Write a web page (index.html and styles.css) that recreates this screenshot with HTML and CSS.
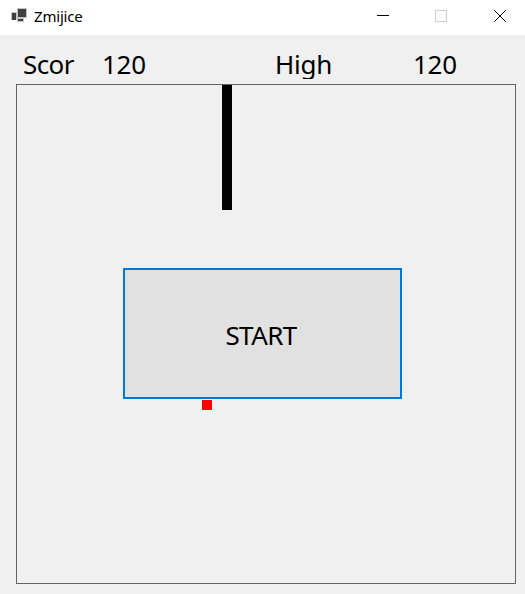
FILE: index.html
```html
<!DOCTYPE html>
<html lang="sr">
<head>
<meta charset="utf-8">
<title>Zmijice</title>
<link rel="stylesheet" href="styles.css">
</head>
<body>
<div class="window">
  <header class="titlebar">
    <svg class="app-icon" width="16" height="15" viewBox="0 0 16 15" shape-rendering="crispEdges">
      <path fill="#c4c4c4" d="M6 0h10v10h-3v4H6v-2H0V4h6z"/>
      <path fill="#404040" d="M7 1h8v8H7zM1 5h4v7H1zM7 11h5v2H7z"/>
    </svg>
    <h1 class="title">Zmijice</h1>
    <div class="controls">
      <svg class="control" viewBox="0 0 12 12"><path d="M0 5.5h12"/></svg>
      <svg class="control disabled" viewBox="0 0 12 12"><path d="M.5.5h11v11H.5z"/></svg>
      <svg class="control close" viewBox="0 0 12 12"><path d="M.2.2l11.6 11.6M11.8.2L.2 11.8"/></svg>
    </div>
  </header>
  <main class="client">
    <div class="scores">
      <span class="label">Scor</span>
      <span class="value">120</span>
      <span class="label high">High</span>
      <span class="value">120</span>
    </div>
    <section class="board">
      <div class="snake"></div>
      <div class="food"></div>
      <button class="start">START</button>
    </section>
  </main>
</div>
</body>
</html>
```
FILE: styles.css
```css
* { box-sizing: border-box; }
body {
  margin: 0;
  background: #f0f0f0;
  color: #000;
  font-family: "Noto Sans", sans-serif;
  overflow: hidden;
}
.window { width: 525px; height: 594px; }
.titlebar {
  display: flex;
  height: 35px;
  padding-left: 11px;
  background: #fff;
}
.app-icon { margin-top: 8px; }
.title {
  margin: 0 0 0 7px;
  font-size: 15px;
  font-weight: 400;
  line-height: 33px;
  letter-spacing: -0.2px;
}
.controls {
  display: flex;
  gap: 46px;
  margin: 10px 19px 0 auto;
}
.control {
  width: 12px;
  height: 12px;
  fill: none;
  stroke: #000;
  stroke-width: 1;
}
.control.disabled { stroke: #ccc; }
.control.close { margin-left: 1px; }
.client { padding: 11px 9px 0 16px; }
.scores {
  display: grid;
  grid-template-columns: 79px 173px 138px 1fr;
  height: 38px;
  padding-left: 7px;
  font-size: 26px;
  line-height: 36px;
}
.label { letter-spacing: -0.6px; }
.high {
  height: 33px;
  overflow: hidden;
  letter-spacing: -0.2px;
}
.value { letter-spacing: -0.3px; }
.board {
  position: relative;
  width: 500px;
  height: 500px;
  border: 1px solid #646464;
}
.snake {
  position: absolute;
  left: 205px;
  top: 0;
  width: 10px;
  height: 125px;
  background: #000;
}
.food {
  position: absolute;
  left: 185px;
  top: 315px;
  width: 10px;
  height: 10px;
  background: #f00;
}
.start {
  position: absolute;
  left: 106px;
  top: 183px;
  width: 279px;
  height: 131px;
  padding: 3px 3px 0 0;
  border: 2px solid #0078d7;
  background: #e1e1e1;
  color: #000;
  font: 26px "Noto Sans", sans-serif;
  letter-spacing: -0.6px;
}
```
